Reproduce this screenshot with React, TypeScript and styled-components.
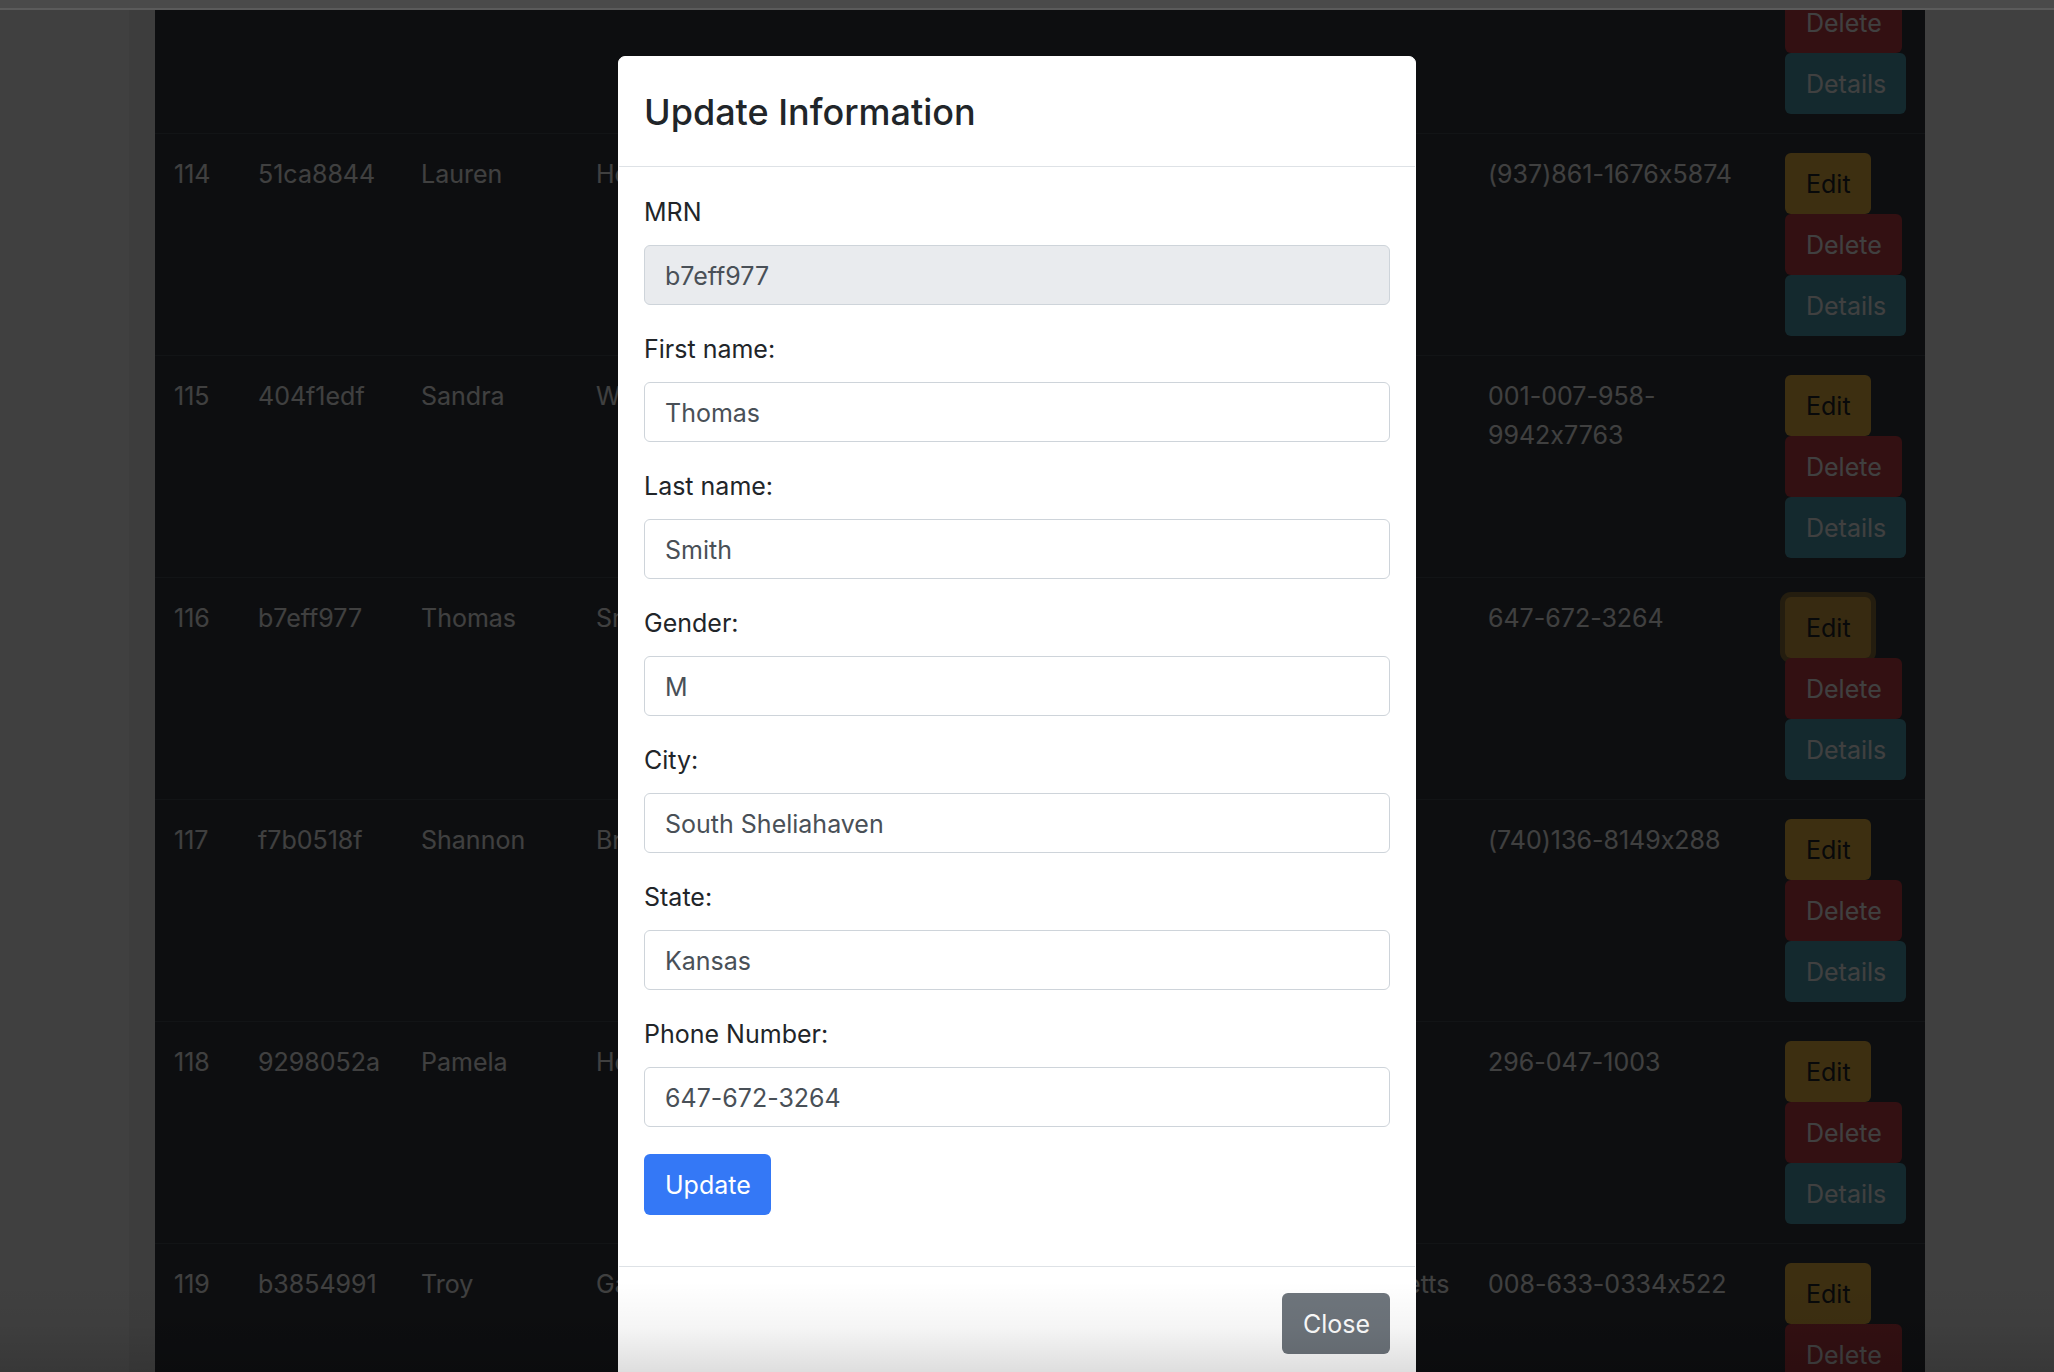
import React from "react";
import styled, { createGlobalStyle } from "styled-components";

const GlobalStyle = createGlobalStyle`
  *, *::before, *::after { box-sizing: border-box; }
  body {
    margin: 0;
    overflow: hidden;
    font-family: Inter, "Liberation Sans", sans-serif;
    font-size: 25px;
    line-height: 39px;
    font-feature-settings: "calt" 0;
    color: #212529;
    background: #ffffff;
  }
`;

const Screen = styled.div`
  display: flex;
  flex-direction: column;
  height: 100vh;
`;

const TopEdge = styled.div`
  flex: none;
  height: 10px;
  background: #4a4a4a;
  border-bottom: 2px solid #5b5b5b;
`;

const Viewport = styled.div`
  position: relative;
  flex: 1;
  min-height: 0;
  overflow: hidden;
`;

const Main = styled.main`
  margin: 0 129px;
  padding-left: 26px;
  background: #f1f4f4;
`;

const Table = styled.table`
  width: 100%;
  margin-top: -18px;
  table-layout: fixed;
  border-collapse: separate;
  border-spacing: 0;
  background: #343a40;
  color: #ffffff;
`;

const Col = styled.col<{ $width?: number }>`
  width: ${(p) => (p.$width ? `${p.$width}px` : "auto")};
`;

const Row = styled.tr<{ $first?: boolean }>`
  > td {
    padding: 21px 19px 19px;
    border-top: ${(p) => (p.$first ? "0" : "1px solid #4a5158")};
    vertical-align: top;
  }
  > td:last-child {
    padding-top: ${(p) => (p.$first ? "0" : "19px")};
  }
`;

const Actions = styled.div`
  display: flex;
  flex-direction: column;
  align-items: flex-start;
`;

const palette = {
  primary: ["#3478f6", "#ffffff"],
  secondary: ["#6e757c", "#ffffff"],
  warning: ["#f4bc44", "#212529"],
  danger: ["#cc4048", "#ffffff"],
  info: ["#50a4b8", "#ffffff"],
};

const Button = styled.button<{ $tone: keyof typeof palette; $focused?: boolean }>`
  height: 61px;
  padding: 2px 19px 0 20px;
  border: 1px solid transparent;
  border-radius: 6px;
  font: inherit;
  font-feature-settings: inherit;
  white-space: nowrap;
  color: ${(p) => palette[p.$tone][1]};
  background: ${(p) => (p.$focused ? "#dca844" : palette[p.$tone][0])};
  box-shadow: ${(p) => (p.$focused ? "0 0 0 5px #90743c" : "none")};
`;

const Backdrop = styled.div`
  position: absolute;
  inset: 0;
  background: rgba(0, 0, 0, 0.75);
`;

const ModalLayer = styled.div`
  position: absolute;
  inset: 0;
  padding: 46px 20px 0 0;
  overflow: hidden;
`;

const Modal = styled.section`
  max-width: 798px;
  margin: 0 auto;
  border: 1px solid #ffffff;
  border-radius: 7px;
  background: #ffffff;
`;

const ModalHeader = styled.header`
  padding: 27px 25px 25px;
  border-bottom: 1px solid #dee2e6;
`;

const Title = styled.h4`
  margin: 0;
  font-size: 36px;
  line-height: 57px;
  font-weight: 500;
`;

const ModalBody = styled.div`
  padding: 26px 25px 51px;
`;

const Form = styled.form`
  display: flex;
  flex-direction: column;
  align-items: flex-start;
  gap: 27px;
`;

const Fields = styled.div`
  display: grid;
  gap: 25px;
  width: 100%;
`;

const Field = styled.div`
  display: flex;
  flex-direction: column;
  gap: 13px;
`;

const Input = styled.input`
  width: 100%;
  height: 60px;
  padding: 1px 20px 0;
  border: 1px solid #ced4da;
  border-radius: 6px;
  font: inherit;
  font-feature-settings: inherit;
  color: #495057;
  background: #ffffff;
  &:read-only { background: #e9ebee; }
`;

const ModalFooter = styled.footer`
  display: flex;
  justify-content: flex-end;
  padding: 26px 25px;
  border-top: 1px solid #dee2e6;
`;

const BottomShade = styled.div`
  position: absolute;
  inset: auto 0 0;
  height: 90px;
  pointer-events: none;
  background: linear-gradient(to bottom, rgba(0, 0, 0, 0), rgba(0, 0, 0, 0.04) 50%, rgba(0, 0, 0, 0.13));
`;

type Patient = {
  id: number;
  mrn: string;
  first: string;
  last: string;
  state?: string;
  phone: string;
};

const patients: Patient[] = [
  { id: 114, mrn: "51ca8844", first: "Lauren", last: "Howard", phone: "(937)861-1676x5874" },
  { id: 115, mrn: "404f1edf", first: "Sandra", last: "Wilson", phone: "001-007-958-9942x7763" },
  { id: 116, mrn: "b7eff977", first: "Thomas", last: "Smith", state: "Kansas", phone: "647-672-3264" },
  { id: 117, mrn: "f7b0518f", first: "Shannon", last: "Brown", phone: "(740)136-8149x288" },
  { id: 118, mrn: "9298052a", first: "Pamela", last: "Hooper", phone: "296-047-1003" },
  { id: 119, mrn: "b3854991", first: "Troy", last: "Garcia", state: "Massachusetts", phone: "008-633-0334x522" },
];

const fields = [
  { id: "mrn", label: "MRN", value: "b7eff977", readOnly: true },
  { id: "first", label: "First name:", value: "Thomas" },
  { id: "last", label: "Last name:", value: "Smith" },
  { id: "gender", label: "Gender:", value: "M" },
  { id: "city", label: "City:", value: "South Sheliahaven" },
  { id: "state", label: "State:", value: "Kansas" },
  { id: "phone", label: "Phone Number:", value: "647-672-3264" },
];

export default function App() {
  return (
    <Screen>
      <GlobalStyle />
      <TopEdge />
      <Viewport>
        <Main>
          <Table>
            <colgroup>
              <Col $width={84} />
              <Col $width={163} />
              <Col $width={175} />
              <Col />
              <Col $width={216} />
              <Col $width={297} />
              <Col $width={159} />
            </colgroup>
            <tbody>
              <Row $first>
                <td colSpan={6} />
                <td>
                  <Actions>
                    <Button $tone="danger">Delete</Button>
                    <Button $tone="info">Details</Button>
                  </Actions>
                </td>
              </Row>
              {patients.map((p) => (
                <Row key={p.id}>
                  <td>{p.id}</td>
                  <td>{p.mrn}</td>
                  <td>{p.first}</td>
                  <td>{p.last}</td>
                  <td>{p.state}</td>
                  <td>{p.phone}</td>
                  <td>
                    <Actions>
                      <Button $tone="warning" $focused={p.id === 116}>Edit</Button>
                      <Button $tone="danger">Delete</Button>
                      <Button $tone="info">Details</Button>
                    </Actions>
                  </td>
                </Row>
              ))}
            </tbody>
          </Table>
        </Main>
        <Backdrop />
        <ModalLayer>
          <Modal role="dialog" aria-labelledby="modal-title">
            <ModalHeader>
              <Title id="modal-title">Update Information</Title>
            </ModalHeader>
            <ModalBody>
              <Form onSubmit={(e) => e.preventDefault()}>
                <Fields>
                  {fields.map((f) => (
                    <Field key={f.id}>
                      <label htmlFor={f.id}>{f.label}</label>
                      <Input id={f.id} type="text" defaultValue={f.value} readOnly={f.readOnly} />
                    </Field>
                  ))}
                </Fields>
                <Button $tone="primary" type="submit">Update</Button>
              </Form>
            </ModalBody>
            <ModalFooter>
              <Button $tone="secondary" type="button">Close</Button>
            </ModalFooter>
          </Modal>
        </ModalLayer>
        <BottomShade />
      </Viewport>
    </Screen>
  );
}
